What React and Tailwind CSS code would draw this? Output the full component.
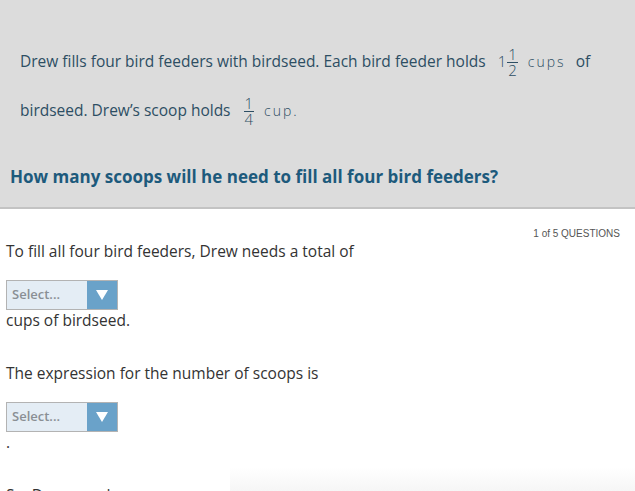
import React from 'react';

const Frac = ({ num, den }) => (
  <span className="inline-flex flex-col items-center align-middle mx-[1px] text-[15px] leading-[13px] font-light">
    <span className="px-[1px]">{num}</span>
    <span className="w-full border-t border-[#2d4e63] my-[1px]"></span>
    <span className="px-[1px]">{den}</span>
  </span>
);

const SelectBox = () => (
  <div className="flex w-[112px] h-[30px] border border-[#b3b3b3] bg-[#e4edf5]">
    <span className="flex-1 flex items-center pl-[5px] text-[13px] font-semibold text-[#8a8f94]">Select...</span>
    <span className="w-[30px] flex items-center justify-center bg-[#6aa2c9]">
      <svg width="12" height="10" viewBox="0 0 12 10">
        <polygon points="0,0 12,0 6,10" fill="#ffffff" />
      </svg>
    </span>
  </div>
);

export default function App() {
  return (
    <div className="relative w-[635px] h-[491px] overflow-hidden bg-white font-['Open_Sans',sans-serif]">
      <div className="h-[209px] bg-[#dcdcdc] border-b-2 border-[#c3c3c3]">
        <p className="pl-[20px] pr-[20px] pt-[37px] text-[15.5px] leading-[49px] text-[#2d4e63]">
          Drew fills four bird feeders with birdseed. Each bird feeder holds{' '}
          <span className="ml-[8px] text-[15px] font-light">1</span>
          <Frac num="1" den="2" />
          <span className="ml-[9px] mr-[6px] text-[14px] font-light tracking-[2px]">cups</span>
          {' '}of birdseed. Drew’s scoop holds{' '}
          <span className="ml-[8px]"></span>
          <Frac num="1" den="4" />
          <span className="ml-[9px] text-[14px] font-light tracking-[2px]">cup.</span>
        </p>
        <p className="mt-[32px] pl-[10px] text-[17px] leading-[20px] font-bold text-[#1d5a7c]">
          How many scoops will he need to fill all four bird feeders?
        </p>
      </div>

      <div className="px-[6px] text-[15.5px] text-[#333333]">
        <div className="mt-[18px] pr-[9px] text-right font-['Liberation_Sans',sans-serif] text-[10px] leading-[14px] text-[#555555]">
          1 of 5 QUESTIONS
        </div>
        <p className="leading-[20px]">To fill all four bird feeders, Drew needs a total of</p>
        <div className="mt-[19px]">
          <SelectBox />
        </div>
        <p className="leading-[20px]">cups of birdseed.</p>
        <p className="mt-[33px] leading-[20px]">The expression for the number of scoops is</p>
        <div className="mt-[19px]">
          <SelectBox />
        </div>
        <p className="leading-[20px]">.</p>
        <p className="mt-[33px] leading-[20px]">So, Drew needs</p>
      </div>

      <div className="absolute bottom-0 left-[230px] right-0 h-[24px] bg-gradient-to-b from-transparent to-[#f6f6f6]"></div>
    </div>
  );
}
